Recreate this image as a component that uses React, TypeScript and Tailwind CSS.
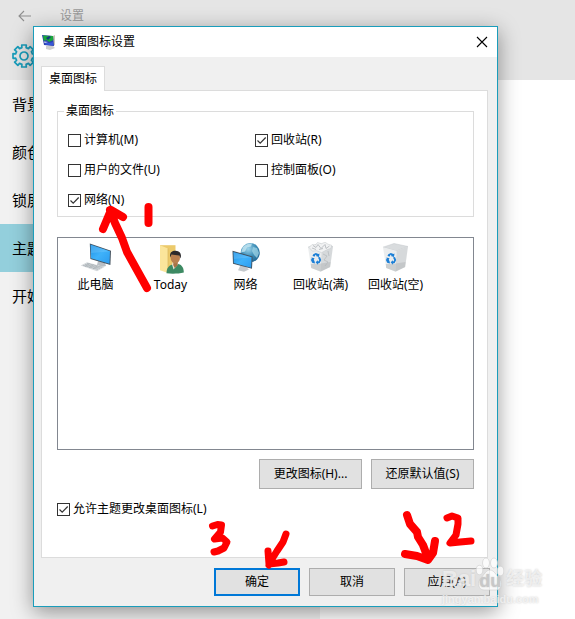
import { useState } from "react";

const menuItems = ["背景", "颜色", "锁屏界面", "主题", "开始"];

const desktopOptions = [
  { id: "computer", label: "计算机(M)", checked: false },
  { id: "recycle", label: "回收站(R)", checked: true },
  { id: "files", label: "用户的文件(U)", checked: false },
  { id: "panel", label: "控制面板(O)", checked: false },
  { id: "network", label: "网络(N)", checked: true },
];

// =========================
// ICONS
// =========================
const BackIcon = () => (
  <svg viewBox="0 0 14 12" className="h-3 w-3.5" fill="none" stroke="#8f8f8f" strokeWidth="1.1">
    <path d="M13 6H1M6 1L1 6l5 5" />
  </svg>
);

const GearIcon = () => (
  <svg viewBox="-12 -12 24 24" className="size-6" fill="none" stroke="#1a9dbb" strokeWidth="1.7" strokeLinejoin="round">
    <path d="M8.4-2.1L11-2.3V2.3L8.4 2.1L7.4 4.45L9.4 6.15L6.15 9.4L4.45 7.4L2.1 8.4L2.3 11H-2.3L-2.1 8.4L-4.45 7.4L-6.15 9.4L-9.4 6.15L-7.4 4.45L-8.4 2.1L-11 2.3V-2.3L-8.4-2.1L-7.4-4.45L-9.4-6.15L-6.15-9.4L-4.45-7.4L-2.1-8.4L-2.3-11H2.3L2.1-8.4L4.45-7.4L6.15-9.4L9.4-6.15L7.4-4.45Z" />
    <circle r="4" />
  </svg>
);

const TitleIcon = () => (
  <svg viewBox="0 0 16 16" className="size-4">
    <path d="M5 12l6-1 3 3-5 2-4-1z" fill="#cfcfcf" />
    <path d="M12 2l2-1v10l-2 1z" fill="#c9c6b8" />
    <path d="M1 1l11 1 1 10-10-1z" fill="#2b3fae" />
    <path d="M2 1.500l10 .500.300 4-4 2-3-2-2.500 1z" fill="#19a83b" />
    <path d="M5 4l3-2 2 1-3 3z" fill="#123a7a" />
    <path d="M4 8l4 1 4-1 .500 3.500-8-1z" fill="#3857d8" />
    <path d="M3 7.500l4 .5-3.500 1z" fill="#d9e2f5" />
  </svg>
);

const ScreenFill = () => (
  <defs>
    <linearGradient id="screen" x1="0" y1="0" x2="1" y2="1">
      <stop offset="0" stopColor="#1d8fe3" />
      <stop offset="0.5" stopColor="#3fb2fa" />
      <stop offset="1" stopColor="#2b9cf0" />
    </linearGradient>
    <radialGradient id="globe" cx="0.4" cy="0.3" r="0.8">
      <stop offset="0" stopColor="#9bd3ea" />
      <stop offset="0.5" stopColor="#3f8fb8" />
      <stop offset="1" stopColor="#1d5f8c" />
    </radialGradient>
  </defs>
);

const ComputerIcon = () => (
  <svg viewBox="0 0 32 32" className="size-8">
    <ScreenFill />
    <path d="M18 19l7 2 1 3-4 1-5-2z" fill="#b9bfc5" />
    <path d="M.7 23.500L7 20.300 24.500 25l-7.500 4.300z" fill="#d5d9dc" />
    <path d="M3 23.300l15 4M5 22.300l15 4M7 21.300l15 4M5 24.600l4.500-3M9 25.700l4.500-3M13 26.800l4.500-3" stroke="#9fa7ad" strokeWidth="0.6" />
    <path d="M9.800 1.500L31 8.700l-.6 14.200-20-6z" fill="#44525f" />
    <path d="M10.500 2.500l19.500 6.800-.5 12.400-18.500-5.500z" fill="url(#screen)" />
    <path d="M11 3l18.500 6.500L11.200 11z" fill="#7fcbfb" opacity="0.35" />
  </svg>
);

const UserFolderIcon = () => (
  <svg viewBox="0 0 32 32" className="size-8">
    <path d="M5 3.200h15.500V27H5z" fill="#ecca6b" />
    <path d="M5 3.200L13 6.500V31l-8-2.700z" fill="#fbe59b" />
    <path d="M13 6.500V31" stroke="#d8b559" strokeWidth="0.7" />
    <path d="M11.500 31.300c0-5 2-7.800 6-8.800l6-.5c3.500 1 5.300 4 5.300 8.500-5 1.300-12 1.500-17.300.8z" fill="#3d8a63" />
    <path d="M17 22.300l1.500 5.200 5-5.800-1.500-2h-4z" fill="#e9e4d8" />
    <path d="M18.500 20h4.200v3.200l-3 2.800-1.500-3z" fill="#a87346" />
    <ellipse cx="20.300" cy="15.800" rx="4.700" ry="5.600" fill="#b9804f" />
    <path d="M15.200 15.500c-1-5 2-7 5.500-6.700 4.500.2 6 3 4.900 7.700l-1.300-3c-3-.2-5.500-.5-7.800-1z" fill="#2b2a2c" />
  </svg>
);

const NetworkIcon = () => (
  <svg viewBox="0 0 32 32" className="size-8">
    <circle cx="20.200" cy="10.700" r="9.600" fill="url(#globe)" />
    <path d="M13 5c3-3 7-4 9-3.500l-1 3-4 1-2 4-4 1z" fill="#c4e6f1" opacity="0.8" />
    <path d="M23 5l4 1 2 5-2 5-3-3-2-4z" fill="#a5d8e8" opacity="0.7" />
    <path d="M10.500 23l5 1.500 3.500 3-5 2.300-6-1.500z" fill="#c4c9cd" />
    <path d="M2.500 8.800L22.600 14.500l-.6 12.300-19-5z" fill="#44525f" />
    <path d="M3.400 10l18.200 5.200-.5 10.500-17.300-4.600z" fill="url(#screen)" />
    <path d="M3.500 10.200l17.700 5L4 17z" fill="#7fcbfb" opacity="0.35" />
  </svg>
);

const RecycleBinIcon = ({ full }: { full?: boolean }) => (
  <svg viewBox="0 0 32 32" className="size-8">
    <path d="M3 5.200L14 1.500 28 4.500 16.500 9z" fill="#d9dcde" stroke="#c3c7ca" strokeWidth="0.5" />
    <path d="M3 5.200L16.500 9l-1 20.800L6.200 26z" fill="#ebedee" />
    <path d="M28 4.500L16.500 9l-1 20.800L25.200 25z" fill="#d6d9db" />
    <path d="M5.800 22l10-.5 9.700-1.500-.5 5-9.500 4.500L6.200 26z" fill="#b7babd" opacity="0.6" />
    {full && (
      <>
        <path d="M4 5.500l3-3 3.500.5 2-2.500 4 1.200 3.500-1.500 3 2 3.500 1-.5 3-4 1.500-5.500 3-5-2-4 .5z" fill="#f1f2f3" stroke="#c2c6c9" strokeWidth="0.5" />
        <path d="M8 3.500l3 2 2-3 3 4 4-4 1 4 3.500-2.500M7 6l4 1.500M14 7.500l4-1" fill="none" stroke="#a9aeb2" strokeWidth="0.7" />
        <path d="M18 12l4 2-3 4 4 2-3 4M23 9l1 5" fill="none" stroke="#b3b7ba" strokeWidth="0.7" />
      </>
    )}
    <g fill="#1c7fd6">
      <path d="M8.300 12.300l2.500-1.300 2.700 1 1-.5-.5 3.500-3.200-1 .8-.8-1.100-.4-1 2-2-1z" />
      <path d="M6.500 15.500l3 .8-.7 1.200 1 2.500v1.600l-2.600-.8-1.400-3 .9-.9z" />
      <path d="M13 15.500l2-.5 1.200 3-1.500 3-1.800.4v1.300l-2.300-2.500 2.300-2v1.200l.8-.2.500-1.200z" />
    </g>
  </svg>
);

const listIcons = [
  { label: "此电脑", icon: <ComputerIcon /> },
  { label: "Today", icon: <UserFolderIcon /> },
  { label: "网络", icon: <NetworkIcon /> },
  { label: "回收站(满)", icon: <RecycleBinIcon full /> },
  { label: "回收站(空)", icon: <RecycleBinIcon /> },
];

const CheckField = ({ id, label, checked }: { id: string; label: string; checked: boolean }) => (
  <div className="flex items-center gap-[3px]">
    <span className="grid">
      <input
        id={id}
        type="checkbox"
        defaultChecked={checked}
        className="peer col-start-1 row-start-1 size-[13px] appearance-none border border-[#333333] bg-white"
      />
      <svg
        viewBox="0 0 13 13"
        className="pointer-events-none invisible col-start-1 row-start-1 size-[13px] peer-checked:visible"
        fill="none"
        stroke="#333333"
        strokeWidth="1.2"
      >
        <path d="M2.500 6.500l2.700 2.700 5.500-5.700" />
      </svg>
    </span>
    <label htmlFor={id}>{label}</label>
  </div>
);

// Hand-drawn steps 1, 2, 3 on top of the dialog
const Steps = () => (
  <svg
    viewBox="0 0 575 619"
    className="pointer-events-none absolute top-0 left-0 h-[619px] w-[575px]"
    fill="none"
    stroke="#ff0000"
    strokeWidth="8"
    strokeLinecap="round"
    strokeLinejoin="round"
  >
    <path d="M103 229l8-19 12 7M110 210l5 13 7 15 5 14 20 36" />
    <path d="M148.500 207v16" />
    <path d="M212.500 526l5-1.500 4 .5-1 7-6 7 8-1 4.500 4-3 6-6 3-4 1" strokeWidth="7" />
    <path d="M286 534l-3 8-6 9-5 8-3 6M268 551l1 13 9-1 6-1" strokeWidth="7" />
    <path d="M407 515l3 9 7 8 1 5 5 8 3 8 3 5M405 554l12 2 11 4 5-7 2-12" />
    <path d="M447 518l5-2 6 2 0 6-2 11-6 8 10-1 11-1" strokeWidth="7" />
  </svg>
);

const Watermark = () => (
  <div className="pointer-events-none absolute top-[557px] left-[442px] flex flex-col font-['Liberation_Sans','Noto_Sans_CJK_SC',sans-serif] text-white/60 [text-shadow:0_0_2px_#c8c8c8]">
    <div className="flex h-[34px] items-end">
      <span className="text-[22px] leading-6 font-bold">Bai</span>
      <span className="grid h-[34px] w-7">
        <svg viewBox="0 0 28 34" className="col-start-1 row-start-1 h-[34px] w-7" fill="#ffffff" fillOpacity="0.75" stroke="#cccccc" strokeWidth="0.6">
          <ellipse cx="3.500" cy="13" rx="3.300" ry="4.700" />
          <ellipse cx="10" cy="6" rx="3.500" ry="5" />
          <ellipse cx="18" cy="6" rx="3.500" ry="5" />
          <ellipse cx="24.500" cy="14" rx="3.300" ry="4.700" />
          <path d="M14 13c4 0 6 5 9 8 4 4 3 12-3 12H8c-6 0-7-8-3-12 3-3 5-8 9-8z" />
        </svg>
        <span className="col-start-1 row-start-1 self-end text-center text-lg leading-5 font-bold text-[#c8c8c8]">du</span>
      </span>
      <span className="ml-0.5 text-lg leading-6 font-bold">经验</span>
    </div>
    <span className="text-[11px] leading-4 font-bold">jingyan.baidu.com</span>
  </div>
);

const App = () => {
  const [active, setActive] = useState("主题");

  return (
    <div className="relative flex min-h-screen flex-col overflow-hidden bg-white font-['Noto_Sans','Noto_Sans_CJK_SC',sans-serif] text-xs text-black">
      {/* SETTINGS WINDOW */}
      <header className="h-20 bg-[#e5e5e5]">
        <div className="flex h-8 items-center gap-7 pl-[18px] text-[#999999]">
          <button aria-label="返回">
            <BackIcon />
          </button>
          <span>设置</span>
        </div>
        <div className="flex h-12 items-center pl-3">
          <GearIcon />
        </div>
      </header>
      <nav className="flex w-80 grow flex-col bg-[#f1f1f1]">
        {menuItems.map((m) => (
          <button
            key={m}
            onClick={() => setActive(m)}
            className={
              active === m
                ? "h-12 bg-[#93cfdc] pl-3 text-left text-[15px]"
                : "h-12 pl-3 text-left text-[15px]"
            }
          >
            {m}
          </button>
        ))}
      </nav>

      {/* DIALOG */}
      <div
        role="dialog"
        aria-labelledby="dialog-title"
        className="absolute top-[26px] left-[33px] flex w-full max-w-[465px] flex-col border border-[#1a9dbb] bg-[#f0f0f0] shadow-[0_5px_20px_rgba(0,0,0,0.4)]"
      >
        <div className="flex h-[30px] items-center gap-1.5 bg-white pr-[7px] pl-[7px]">
          <TitleIcon />
          <h1 id="dialog-title" className="grow">桌面图标设置</h1>
          <button aria-label="关闭" className="p-0.5">
            <svg viewBox="0 0 12 12" className="size-3" stroke="#000000" strokeWidth="1.1">
              <path d="M1 1l10 10M11 1L1 11" />
            </svg>
          </button>
        </div>

        <div className="flex flex-col pt-[9px] pr-[9px] pl-[7px]">
          <div role="tablist" className="flex">
            <button
              role="tab"
              aria-selected="true"
              className="relative -mb-px h-[25px] w-16 border border-b-0 border-[#dcdcdc] bg-white"
            >
              桌面图标
            </button>
          </div>

          <div className="flex flex-col border border-[#dcdcdc] bg-white pt-[11px] pr-[13px] pb-10 pl-[15px]">
            <fieldset className="border border-[#dcdcdc] px-2.5 pt-[5px] pb-px">
              <legend className="-ml-1 px-0.5 leading-[18px]">桌面图标</legend>
              <div className="grid auto-rows-[30px] grid-cols-[187px_1fr]">
                {desktopOptions.map((o) => (
                  <CheckField key={o.id} {...o} />
                ))}
              </div>
            </fieldset>

            <ul className="mt-5 flex min-h-[213px] flex-wrap content-start border border-[#828790] pt-1">
              {listIcons.map((i) => (
                <li key={i.label} className="flex w-[75px] flex-col items-center gap-0.5">
                  {i.icon}
                  <span className="leading-[18px] whitespace-nowrap">{i.label}</span>
                </li>
              ))}
            </ul>

            <div className="mt-[9px] flex justify-end gap-[9px]">
              <button className="h-[30px] w-[103px] border border-[#adadad] bg-[#e1e1e1]">更改图标(H)...</button>
              <button className="h-[30px] w-[103px] border border-[#adadad] bg-[#e1e1e1]">还原默认值(S)</button>
            </div>

            <div className="mt-3">
              <CheckField id="allow-themes" label="允许主题更改桌面图标(L)" checked />
            </div>
          </div>
        </div>

        <div className="flex justify-end gap-[9px] pt-2.5 pr-[7px] pb-2.5">
          <button className="h-7 w-[86px] border-2 border-[#0078d7] bg-[#e1e1e1]">确定</button>
          <button className="h-7 w-[86px] border border-[#adadad] bg-[#e1e1e1]">取消</button>
          <button className="h-7 w-[86px] border border-[#adadad] bg-[#e1e1e1]">应用(A)</button>
        </div>
      </div>

      <Watermark />
      <Steps />
    </div>
  );
};

export default App;
